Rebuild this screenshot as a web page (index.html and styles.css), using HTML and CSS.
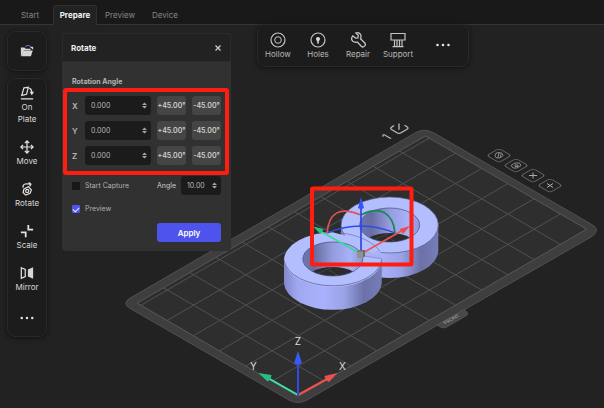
FILE: index.html
```html
<!DOCTYPE html>
<html lang="en">
<head>
<meta charset="utf-8">
<title>Prepare</title>
<link rel="stylesheet" href="styles.css">
</head>
<body>
<header class="topbar">
  <nav class="tabs">
    <a class="tab" href="#start">Start</a>
    <a class="tab tab-active" href="#prepare" aria-current="page">Prepare</a>
    <a class="tab" href="#preview">Preview</a>
    <a class="tab" href="#device">Device</a>
  </nav>
</header>
<main class="workspace">
  <svg class="scene" viewBox="0 24 604 384" preserveAspectRatio="xMinYMin slice" aria-hidden="true">
    <defs>
      <linearGradient id="wall" x1="0" x2="1">
        <stop offset="0" stop-color="#8288cc"/><stop offset=".14" stop-color="#a0a8f0"/><stop offset=".4" stop-color="#a8b2fc"/><stop offset=".62" stop-color="#9aa2e6"/><stop offset=".82" stop-color="#6c71a8"/><stop offset="1" stop-color="#777db8"/>
      </linearGradient>
      <linearGradient id="inner" x1="0" x2="1">
        <stop offset="0" stop-color="#6f75b0"/><stop offset=".2" stop-color="#686da2"/><stop offset=".5" stop-color="#959ddf"/><stop offset=".8" stop-color="#a9b1f8"/><stop offset="1" stop-color="#8d94d6"/>
      </linearGradient>
      <clipPath id="hole"><ellipse cx="0" cy="-1" rx="30" ry="17"/></clipPath>
      <g id="hole-view">
        <ellipse cx="0" cy="-1" rx="30" ry="17" fill="url(#inner)"/>
        <g clip-path="url(#hole)"><ellipse cx="0" cy="24" rx="30" ry="17" fill="#2b2b2b"/><path d="M-30 20L30 -6M-4 10L20 24" stroke="#4a4a4a" stroke-width=".8" clip-path="url(#hole-floor)"/></g>
        <ellipse cx="0" cy="-1" rx="30" ry="17" fill="none" stroke="#4c5076" stroke-width=".7"/>
      </g>
      <clipPath id="hole-floor"><ellipse cx="0" cy="24" rx="30" ry="17"/></clipPath>
      <g id="tile"><rect x="-7" y="-7" width="14" height="14" rx="3" fill="none" stroke="#666" stroke-width="1"/></g>
    </defs>

    <!-- build plate -->
    <path d="M132 297L415 133Q424 127.500 434 133L591 224Q602 230 591 237L307 400Q298 405 289 400L131 309Q120 303 132 297Z" fill="#3e3e3e" stroke="#505050" stroke-width="1"/>
    <path d="M298 396.400L137.200 303.100L425.400 135.900L586.600 229.200Z" fill="#2e2e2e" stroke="#585858" stroke-width="1"/>
    <g stroke="#515151" stroke-width="1" fill="none">
      <path d="M272.100 381.200L560.400 214M245.900 366L534.100 198.800M219.700 350.800L507.900 183.600M193.500 335.600L481.700 168.400M167.300 320.400L455.500 153.200M141.100 305.200L429.300 138"/>
      <path d="M324.500 381.200L163.400 287.700M350.700 366L189.600 272.500M376.900 350.800L215.800 257.300M403.100 335.600L242 242.100M429.300 320.400L268.200 226.900M455.500 305.200L294.400 211.700M481.700 290L320.600 196.500M507.900 274.800L346.800 181.300M534.100 259.600L373 166.100M560.300 244.400L399.200 150.900"/>
    </g>
    <path d="M437 325L441 327.500Q444 328.500 447 327L466 316Q469 314 467 312L464 309.500Z" fill="#484848" stroke="#5a5a5a" stroke-width=".6"/>
    <text class="front-mark" transform="matrix(.866 -.5 .866 .5 453 320)">FRONT</text>
    <text class="plate-number" transform="matrix(.866 -.5 .866 .5 390 139)">1</text>
    <g fill="none" stroke="#bcbcbc" stroke-width="1.300">
      <path d="M394 125.500L391.500 127.300Q390 128.500 391.500 129.500L397 132.800Q399 134 401 132.800L407 129.300Q409 128 407 126.700L404.500 125.300M399 123.500V129.800"/>
    </g>
    <g stroke="#8b8b8b" fill="none" stroke-width="1">
      <g transform="translate(499 155.500)"><use href="#tile" transform="matrix(.866 .5 .866 -.5 0 0)"/><path d="M-4 0Q-4 -3 0 -3Q4 -3 4 0Q3 2 0 2.500Q-4 3 -4 0M-1 2L0 -3M1.500 2L2 -2"/></g>
      <g transform="translate(516 165.500)"><use href="#tile" transform="matrix(.866 .5 .866 -.5 0 0)"/><path d="M-5 0L-1 -2.500H3.500L5 0L1 2.500H-3ZM-1 -.5H2V1H-1Z"/></g>
      <g transform="translate(533 175.500)"><use href="#tile" transform="matrix(.866 .5 .866 -.5 0 0)"/><path d="M-4 0H4M0 -3V3" stroke="#aaa"/></g>
      <g transform="translate(550 185.500)"><use href="#tile" transform="matrix(.866 .5 .866 -.5 0 0)"/><path d="M-3 -2L3 2M3 -2L-3 2" stroke="#aaa"/></g>
    </g>

    <!-- rings -->
    <path d="M341 225V250A48.600 28 0 0 0 438.300 250V225Z" fill="url(#wall)"/>
    <ellipse cx="389.700" cy="225" rx="48.600" ry="28" fill="#b3befe" stroke="#575c8a" stroke-width=".7"/>
    <use href="#hole-view" transform="translate(389.700 226)"/>
    <path d="M284 260V284A49 28 0 0 0 381.700 284V258Z" fill="url(#wall)"/>
    <path d="M284 260A49 28 0 0 1 332.800 232.300L352 237.500Q368 250 382 253V258A49 28 0 0 1 284 260Z" fill="#b3befe"/>
    <path d="M284 260A49 28 0 0 0 381.700 260" fill="none" stroke="#575c8a" stroke-width=".7"/>
    <path d="M340 232.500Q356 235 366 240T380 251" fill="none" stroke="#6c72a4" stroke-width=".7"/>
    <use href="#hole-view" transform="translate(332.800 260)"/>
    <path d="M361 251L382 253.500V260L362 256Z" fill="#a7b1f4"/>
    <path d="M364 256L381.700 258.500V277" fill="none" stroke="#7b82bd" stroke-width=".6"/>

    <!-- rotation handle -->
    <g fill="none" stroke-width="1.700">
      <path d="M327 233Q344 226 361 226T395 233" stroke="#2b4de0"/>
      <path d="M327 233C329 213 339 206 361 215" stroke="#e35058"/>
      <path d="M361 215C380 205 393 213 395 233" stroke="#168857"/>
      <path d="M361 254L320 231" stroke="#35dc98"/>
      <path d="M361 254L403 230" stroke="#ec5353"/>
      <path d="M361 254V205" stroke="#2e48e2"/>
    </g>
    <path d="M361 197L364 208Q361 210 358 208Z" fill="#3256f0"/>
    <path d="M313 226.500L323.500 229L320.500 234Z" fill="#2bc184"/>
    <path d="M410 226L403 234L399.500 229Z" fill="#e84e50"/>
    <path d="M357 251L359 250H365V256L363 258H357Z" fill="#6b6b6b"/><path d="M357 251.500H363V258H357Z" fill="#929292"/>
    <rect x="312" y="188.500" width="99.500" height="76" rx="1" fill="none" stroke="#ff1d12" stroke-width="4"/>

    <!-- world axes -->
    <g fill="none" stroke-width="2">
      <path d="M298 395L268 378" stroke="#3be8a4"/><path d="M298 395L327 379" stroke="#ee5151"/><path d="M298 396V362" stroke="#3349e6"/>
    </g>
    <path d="M298 351L302 363Q298 366 294 363Z" fill="#3759f4"/>
    <path d="M258.500 373L271.500 375Q271 380 267.500 381.500Z" fill="#2bbd82"/>
    <path d="M337.500 373L329 382Q325 380 324.500 376Z" fill="#e95050"/>
    <g class="axis-names"><text x="298" y="345">Z</text><text x="342.500" y="370">X</text><text x="253.500" y="370">Y</text></g>
  </svg>

  <aside class="side">
    <div class="card card-open">
      <button class="tool" aria-label="Open file">
        <svg class="icon" viewBox="0 0 16 16"><path d="M1 14V4h4l1.500 1.500H12V7H4.500L2.500 12" fill="#d6d6d6"/><path d="M4 7.500H14.500L12.500 14H1.500Z" fill="#d6d6d6"/><path d="M6 3Q10 0 13 4" fill="none" stroke="#7070c8" stroke-width="1.300"/><path d="M11.500 3.500L15 3V6.500Z" fill="#ddd"/></svg>
      </button>
    </div>
    <div class="card card-tools">
      <button class="tool">
        <svg class="icon" viewBox="0 0 16 16"><g fill="none" stroke="#e2e2e2" stroke-width="1.400"><path d="M4.500 2.200L9.500 1.500L7.500 9.500L2 10.800ZM1 14.700H15M10.500 2.500Q13.500 3.500 13.500 8"/></g><path d="M11 6.500H16L13.500 10.500Z" fill="#e2e2e2"/></svg>
        <span>On<br>Plate</span>
      </button>
      <button class="tool">
        <svg class="icon" viewBox="0 0 16 16"><path d="M8 1V15M1 8H15M5.500 3.500L8 1L10.500 3.500M5.500 12.500L8 15L10.500 12.500M3.500 5.500L1 8L3.500 10.500M12.500 5.500L15 8L12.500 10.500" fill="none" stroke="#e2e2e2" stroke-width="1.400"/></svg>
        <span>Move</span>
      </button>
      <button class="tool">
        <svg class="icon" viewBox="0 0 16 16"><g fill="none" stroke="#e2e2e2" stroke-width="1.400"><path d="M4.500 8L9.500 5.500L13 9L11.500 13L6.500 15L3.500 12ZM3.500 6.500Q3 2.500 7 2L12 2.500M10 .5L12.500 2.500L11 5"/><circle cx="8.200" cy="10.200" r="1.800"/></g></svg>
        <span>Rotate</span>
      </button>
      <button class="tool">
        <svg class="icon" viewBox="0 0 16 16"><path d="M9.500 1V6.500H15M1 9.500H6.500V15" fill="none" stroke="#e2e2e2" stroke-width="2"/></svg>
        <span>Scale</span>
      </button>
      <button class="tool">
        <svg class="icon" viewBox="0 0 16 16"><path d="M1.500 2L6 4V12L1.500 14Z" fill="none" stroke="#e2e2e2" stroke-width="1.400"/><path d="M9 4L15 1.500V14.500L9 12Z" fill="#d6d6d6"/></svg>
        <span>Mirror</span>
      </button>
      <button class="tool tool-more" aria-label="More tools">
        <svg class="icon" viewBox="0 0 16 16"><g fill="#e2e2e2"><circle cx="2" cy="8" r="1.400"/><circle cx="8" cy="8" r="1.400"/><circle cx="14" cy="8" r="1.400"/></g></svg>
      </button>
    </div>
  </aside>

  <section class="panel" aria-labelledby="panel-title">
    <header class="panel-head">
      <h1 id="panel-title">Rotate</h1>
      <button class="close" aria-label="Close"><svg viewBox="0 0 8 8"><path d="M1.500 1.500L6.500 6.500M6.500 1.500L1.500 6.500" stroke="#d0d0d0" stroke-width="1.200"/></svg></button>
    </header>
    <form class="panel-body">
      <h2>Rotation Angle</h2>
      <div class="angles">
        <label for="x">X</label>
        <div class="field"><input id="x" type="text" value="0.000"><svg class="spin" viewBox="0 0 6 8"><path d="M0 3.300L3 .3L6 3.300ZM0 4.700L3 7.700L6 4.700Z"/></svg></div>
        <button type="button" class="step">+45.00°</button><button type="button" class="step">-45.00°</button>
        <label for="y">Y</label>
        <div class="field"><input id="y" type="text" value="0.000"><svg class="spin" viewBox="0 0 6 8"><path d="M0 3.300L3 .3L6 3.300ZM0 4.700L3 7.700L6 4.700Z"/></svg></div>
        <button type="button" class="step">+45.00°</button><button type="button" class="step">-45.00°</button>
        <label for="z">Z</label>
        <div class="field"><input id="z" type="text" value="0.000"><svg class="spin" viewBox="0 0 6 8"><path d="M0 3.300L3 .3L6 3.300ZM0 4.700L3 7.700L6 4.700Z"/></svg></div>
        <button type="button" class="step">+45.00°</button><button type="button" class="step">-45.00°</button>
      </div>
      <div class="capture">
        <label class="check"><input type="checkbox">Start Capture</label>
        <label class="angle-label" for="angle">Angle</label>
        <div class="field field-small"><input id="angle" type="text" value="10.00"><svg class="spin" viewBox="0 0 6 8"><path d="M0 3.300L3 .3L6 3.300ZM0 4.700L3 7.700L6 4.700Z"/></svg></div>
      </div>
      <label class="check"><input type="checkbox" checked>Preview</label>
      <button type="button" class="apply">Apply</button>
    </form>
  </section>

  <div class="modify">
    <button class="tool">
      <svg class="icon" viewBox="0 0 16 16"><circle cx="8" cy="8" r="7" fill="none" stroke="#c4c4c4" stroke-width="1.200"/><circle cx="8" cy="8" r="3.300" fill="none" stroke="#c4c4c4"/></svg>
      <span>Hollow</span>
    </button>
    <button class="tool">
      <svg class="icon" viewBox="0 0 16 16"><circle cx="8" cy="8" r="7" fill="none" stroke="#c4c4c4" stroke-width="1.200"/><circle cx="8" cy="7" r="2" fill="#ddd"/><path d="M7.200 7H8.800V11.500H7.200Z" fill="#ddd"/></svg>
      <span>Holes</span>
    </button>
    <button class="tool">
      <svg class="icon" viewBox="0 0 16 16"><path d="M5.500 1.200L8 3.500L7.700 6L5.200 6.300L2.500 4Q0 7 2.500 9.500Q4.500 11 7 10.200L11 14.500Q12.500 16 14.300 14.300Q15.800 12.500 14.300 11L10.200 7Q11.500 4 9.700 2Q8 .3 5.500 1.200Z" transform="translate(.3 -.2)" fill="none" stroke="#c4c4c4" stroke-width="1.300"/></svg>
      <span>Repair</span>
    </button>
    <button class="tool">
      <svg class="icon" viewBox="0 0 16 16"><path d="M1 1.500H15V8H1ZM2.500 14.700H13.500M4.500 8V14.500M7 8V14.500M9.500 8V14.500M12 8V14.500" fill="none" stroke="#c4c4c4" stroke-width="1.200"/></svg>
      <span>Support</span>
    </button>
    <button class="tool" aria-label="More">
      <svg class="icon" viewBox="0 0 16 16"><g fill="#e2e2e2"><circle cx="2.500" cy="8" r="1.300"/><circle cx="8" cy="8" r="1.300"/><circle cx="13.500" cy="8" r="1.300"/></g></svg>
    </button>
  </div>
</main>
</body>
</html>
```
FILE: styles.css
```css
* { box-sizing: border-box; }

body {
  margin: 0;
  min-height: 100vh;
  display: flex;
  flex-direction: column;
  background: #222;
  color: #ccc;
  font: 8px/12px Inter, "Open Sans", sans-serif;
  overflow: hidden;
}

button, input { font: inherit; color: inherit; border: 0; margin: 0; padding: 0; background: none; }
h1, h2 { margin: 0; font-size: 8px; }

.topbar { height: 25px; padding: 5px 8px 0; background: #191919; border-bottom: 1px solid #353535; }
.tabs { display: flex; gap: 1px; }
.tab {
  width: 44px;
  height: 20px;
  border: 1px solid transparent;
  border-bottom: 0;
  border-radius: 3px 3px 0 0;
  line-height: 19px;
  text-align: center;
  text-decoration: none;
  color: #858585;
}
.tab-active { background: #222; border-color: #303030; color: #f2f2f2; font-weight: 700; }

.workspace {
  position: relative;
  flex: 1;
  display: flex;
  align-items: flex-start;
  padding-left: 7px;
  margin-top: -1px;
}
.scene { position: absolute; top: 0; left: 0; width: 100%; height: 100%; }
.side, .panel, .modify { position: relative; flex: none; }

.card, .modify {
  background: #1c1c1c;
  border: 1px solid #292929;
  border-radius: 8px;
  box-shadow: 0 1px 5px #111;
}
.side { width: 40px; margin: 7px 15px 0 0; }
.card { display: flex; flex-direction: column; align-items: center; }
.card-open { height: 40px; justify-content: center; margin-bottom: 7px; }
.card-tools { gap: 15px; padding: 7px 0 8px; }
.tool { display: flex; flex-direction: column; align-items: center; gap: 1px; color: #dadada; }
.icon { display: block; width: 14px; height: 14px; }
.tool-more { padding: 3px 0; }

.panel { width: 169px; margin: 9px 26px 0 0; background: #313131; border-radius: 4px; }
.panel-head {
  height: 29px;
  display: flex;
  align-items: center;
  justify-content: space-between;
  padding: 0 8px;
  background: #222;
  border: 1px solid #2b2b2b;
  border-radius: 4px 4px 0 0;
}
.panel-head h1 { color: #eee; }
.close, .close svg { display: block; width: 8px; height: 8px; }
.panel-body { padding: 14px 10px 9px; font-size: 7px; display: flex; flex-direction: column; }
.panel-body h2 { font-size: 7px; color: #b4b4b4; }

.angles {
  position: relative;
  display: grid;
  grid-template-columns: 7px 1fr 29px 29px;
  grid-auto-rows: 19px;
  gap: 6px;
  align-items: stretch;
  margin-top: 8px;
}
.angles::after {
  content: "";
  position: absolute;
  inset: -8px -8px -10px -9px;
  border: 4px solid #ff1d12;
  border-radius: 3px;
  pointer-events: none;
}
.angles label { align-self: center; font-size: 8px; font-weight: 600; color: #b4b4b4; }
.field { display: flex; align-items: center; padding: 0 4px 0 6px; background: #1b1b1b; border-radius: 3px; }
.field input { flex: 1; width: 0; min-width: 0; height: 19px; outline: 0; color: #b8b8b8; }
.field-small { width: 40px; }
.spin { width: 5px; height: 7px; fill: #a6a6a6; }
.step { background: #454545; border-radius: 3px; color: #cfcfcf; font-weight: 600; text-align: center; white-space: nowrap; }

.capture { display: flex; align-items: center; margin: 11px 0 8px; }
.angle-label { margin: 0 5px 0 auto; }
.check { display: flex; align-items: center; gap: 5px; height: 12px; color: #b0b0b0; }
.check input { appearance: none; width: 8px; height: 8px; border-radius: 1px; background: #171717; }
.check input:checked { display: grid; place-items: center; background: #4f53ee; }
.check input:checked::after {
  content: "";
  width: 5px;
  height: 3px;
  border: solid #eee;
  border-width: 0 0 1px 1px;
  transform: rotate(-45deg);
}
.apply { align-self: flex-end; width: 64px; height: 19px; margin-top: 8px; border-radius: 3px; background: #4f53ee; color: #fff; font-size: 8px; font-weight: 600; }

.modify { display: grid; grid-template-columns: repeat(4, 40px) 50px; height: 43px; padding: 7px 0 0; align-items: start; }
.modify .tool { gap: 0; color: #b6b6b6; }
.modify .icon { width: 16px; height: 16px; }
.modify .tool:last-child { padding-top: 5px; }

.axis-names { font: 10px Inter, sans-serif; fill: #ddd; text-anchor: middle; }
.front-mark { font: 5px Inter, sans-serif; fill: #aaa; text-anchor: middle; }
.plate-number { font: 12px Inter, sans-serif; fill: #bcbcbc; text-anchor: middle; }
```
